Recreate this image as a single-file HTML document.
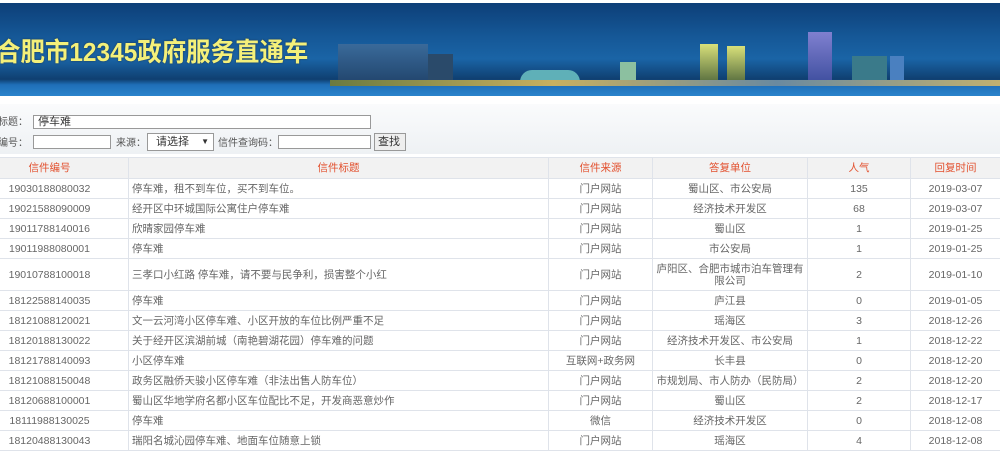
<!DOCTYPE html>
<html><head><meta charset="utf-8"><style>
*{margin:0;padding:0;box-sizing:border-box}
body{width:1000px;height:451px;overflow:hidden;background:#fff;font-family:"Liberation Sans","Noto Sans CJK SC",sans-serif;font-size:10.5px;color:#666;position:relative}
#ban{position:absolute;left:0;top:3px;width:1000px;height:93px;background:linear-gradient(180deg,#0d3f78 0%,#155796 35%,#1a64a6 60%,#0f3f70 82%,#1f6fb8 88%,#2a84cc 100%);overflow:hidden}
#ban .b{position:absolute;bottom:14px}
#title{position:absolute;left:-4px;top:29px;font-size:26px;font-weight:bold;color:#f4f07a;white-space:nowrap;text-shadow:0 0 2px #234;transform:scaleX(0.94);transform-origin:left}
#sa{position:absolute;left:0;top:104px;width:1000px;height:50px;background:linear-gradient(#fafbfc,#eef1f4)}
.lbl{position:absolute;font-size:10px;color:#555}
.inp{position:absolute;border:1px solid #999;background:#fff;height:14px;font-size:11px;padding-left:4px;line-height:12px;color:#333}
table{position:absolute;left:-30px;top:157px;border-collapse:collapse;table-layout:fixed;width:1030px}
td{border:1px solid #dfe3ea;text-align:center;height:20px;padding:0 3px;line-height:12px;white-space:nowrap;overflow:hidden}
tr.h td{background:#f2f2f2;color:#e2502e;height:21px}
td.t{text-align:left}
td.w{white-space:normal}
</style></head><body>
<div id="ban">
<div class="b" style="left:338px;width:90px;height:38px;background:linear-gradient(#3a6a9a,#22466e)"></div>
<div class="b" style="left:428px;width:25px;height:28px;background:#2a4a6a"></div>
<div class="b" style="left:520px;width:60px;height:12px;border-radius:30px 30px 0 0;background:#5fb0b8"></div>
<div class="b" style="left:620px;width:16px;height:20px;background:#8cc0a0"></div>
<div class="b" style="left:700px;width:18px;height:38px;background:linear-gradient(#d8e07a,#5a7040)"></div>
<div class="b" style="left:727px;width:18px;height:36px;background:linear-gradient(#d8e07a,#5a7040)"></div>
<div class="b" style="left:808px;width:24px;height:50px;background:linear-gradient(#8080d0,#4050a0)"></div>
<div class="b" style="left:852px;width:35px;height:26px;background:#3a7a8a"></div>
<div class="b" style="left:890px;width:14px;height:26px;background:#4a80c0"></div>
<div style="position:absolute;left:330px;bottom:10px;width:670px;height:6px;background:linear-gradient(90deg,#6a7a40,#c8b060,#6a8aa0,#c0b070)"></div>
<div id="title">合肥市12345政府服务直通车</div>
</div>
<div id="sa">
<span class="lbl" style="left:-2px;top:9px">标题：</span>
<div class="inp" style="left:33px;top:11px;width:338px">停车难</div>
<span class="lbl" style="left:-2px;top:30px">编号：</span>
<div class="inp" style="left:33px;top:31px;width:78px"></div>
<span class="lbl" style="left:116px;top:30px">来源：</span>
<div class="inp" style="left:147px;top:29px;width:67px;height:18px;line-height:16px;padding-left:8px">请选择<span style="position:absolute;right:4px;font-size:8px">▼</span></div>
<span class="lbl" style="left:218px;top:30px">信件查询码：</span>
<div class="inp" style="left:278px;top:31px;width:93px"></div>
<div class="inp" style="left:374px;top:29px;width:32px;height:18px;background:#eee;line-height:16px;padding-left:3px">查找</div>
</div>
<table>
<colgroup><col style="width:158px"><col style="width:420px"><col style="width:104px"><col style="width:155px"><col style="width:103px"><col style="width:90px"></colgroup>
<tr class="h"><td>信件编号</td><td>信件标题</td><td>信件来源</td><td>答复单位</td><td>人气</td><td>回复时间</td></tr>
<tr><td>19030188080032</td><td class="t">停车难，租不到车位，买不到车位。</td><td>门户网站</td><td>蜀山区、市公安局</td><td>135</td><td>2019-03-07</td></tr>
<tr><td>19021588090009</td><td class="t">经开区中环城国际公寓住户停车难</td><td>门户网站</td><td>经济技术开发区</td><td>68</td><td>2019-03-07</td></tr>
<tr><td>19011788140016</td><td class="t">欣晴家园停车难</td><td>门户网站</td><td>蜀山区</td><td>1</td><td>2019-01-25</td></tr>
<tr><td>19011988080001</td><td class="t">停车难</td><td>门户网站</td><td>市公安局</td><td>1</td><td>2019-01-25</td></tr>
<tr><td style="height:32px">19010788100018</td><td class="t">三孝口小红路 停车难，请不要与民争利，损害整个小红</td><td>门户网站</td><td class="w">庐阳区、合肥市城市泊车管理有限公司</td><td>2</td><td>2019-01-10</td></tr>
<tr><td>18122588140035</td><td class="t">停车难</td><td>门户网站</td><td>庐江县</td><td>0</td><td>2019-01-05</td></tr>
<tr><td>18121088120021</td><td class="t">文一云河湾小区停车难、小区开放的车位比例严重不足</td><td>门户网站</td><td>瑶海区</td><td>3</td><td>2018-12-26</td></tr>
<tr><td>18120188130022</td><td class="t">关于经开区滨湖前城（南艳碧湖花园）停车难的问题</td><td>门户网站</td><td>经济技术开发区、市公安局</td><td>1</td><td>2018-12-22</td></tr>
<tr><td>18121788140093</td><td class="t">小区停车难</td><td>互联网+政务网</td><td>长丰县</td><td>0</td><td>2018-12-20</td></tr>
<tr><td>18121088150048</td><td class="t">政务区融侨天骏小区停车难（非法出售人防车位）</td><td>门户网站</td><td>市规划局、市人防办（民防局）</td><td>2</td><td>2018-12-20</td></tr>
<tr><td>18120688100001</td><td class="t">蜀山区华地学府名都小区车位配比不足，开发商恶意炒作</td><td>门户网站</td><td>蜀山区</td><td>2</td><td>2018-12-17</td></tr>
<tr><td>18111988130025</td><td class="t">停车难</td><td>微信</td><td>经济技术开发区</td><td>0</td><td>2018-12-08</td></tr>
<tr><td>18120488130043</td><td class="t">瑞阳名城沁园停车难、地面车位随意上锁</td><td>门户网站</td><td>瑶海区</td><td>4</td><td>2018-12-08</td></tr>
</table>
</body></html>
